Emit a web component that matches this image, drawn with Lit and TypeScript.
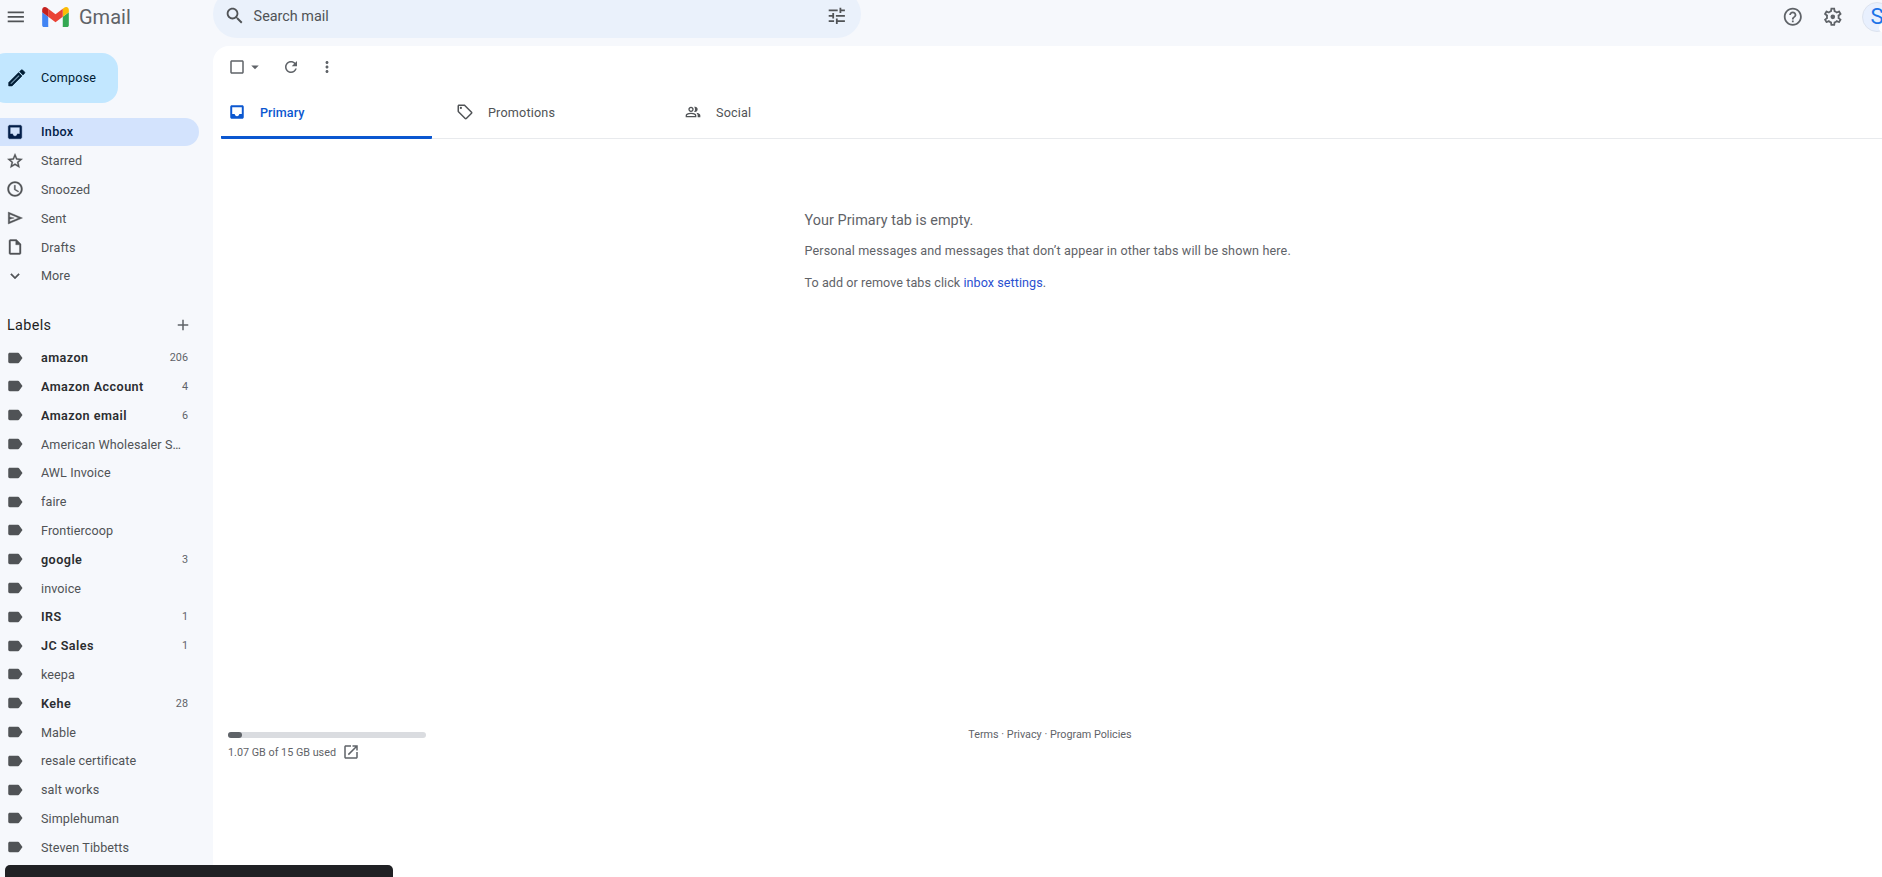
import { html, svg, css, LitElement } from "lit";
import { customElement } from "lit/decorators.js";

const paths = {
  menu: "M3 18h18v-2H3v2zm0-5h18v-2H3v2zm0-7v2h18V6H3z",
  inbox: "M19 3H5c-1.1 0-2 .9-2 2v14c0 1.1.9 2 2 2h14c1.1 0 2-.9 2-2V5c0-1.1-.9-2-2-2zm-.6 11.5H15c0 1.66-1.34 3-3 3s-3-1.34-3-3H5.6V5.6h12.8v8.9z",
  star: "M22 9.24l-7.19-.62L12 2 9.19 8.63 2 9.24l5.46 4.73L5.82 21 12 17.27 18.18 21l-1.63-7.03L22 9.24zM12 15.4l-3.76 2.27 1-4.28-3.32-2.88 4.38-.38L12 6.1l1.71 4.04 4.38.38-3.32 2.88 1 4.28L12 15.4z",
  clock: "M11.99 2C6.47 2 2 6.48 2 12s4.47 10 9.99 10C17.52 22 22 17.52 22 12S17.52 2 11.99 2zM12 20c-4.42 0-8-3.58-8-8s3.58-8 8-8 8 3.58 8 8-3.58 8-8 8zm.5-13H11v6l5.25 3.15.75-1.23-4.5-2.67z",
  send: "M3 20V4l19 8L3 20zm2-3l11.85-5L5 7v3.5l6 1.5-6 1.5V17z",
  draft: "M14 2H6c-1.1 0-1.99.9-1.99 2L4 20c0 1.1.89 2 1.99 2H18c1.1 0 2-.9 2-2V8l-6-6zM6 20V4h7v5h5v11H6z",
  more: "M16.59 8.59L12 13.17 7.41 8.59 6 10l6 6 6-6z",
  add: "M19 13h-6v6h-2v-6H5v-2h6V5h2v6h6v2z",
  label: "M17.63 5.84C17.27 5.33 16.67 5 16 5L5 5.01C3.9 5.01 3 5.9 3 7v10c0 1.1.9 1.99 2 1.99L16 19c.67 0 1.27-.33 1.63-.84L22 12l-4.37-6.16z",
  search: "M15.5 14h-.79l-.28-.27C15.41 12.59 16 11.11 16 9.5 16 5.91 13.09 3 9.5 3S3 5.91 3 9.5 5.91 16 9.5 16c1.61 0 3.09-.59 4.23-1.57l.27.28v.79l5 4.99L20.49 19l-4.99-5zm-6 0C7.01 14 5 11.99 5 9.5S7.01 5 9.5 5 14 7.01 14 9.5 11.99 14 9.5 14z",
  tune: "M3 17v2h6v-2H3zM3 5v2h10V5H3zm10 16v-2h8v-2h-8v-2h-2v6h2zM7 9v2H3v2h4v2h2V9H7zm14 4v-2H11v2h10zm-6-4h2V7h4V5h-4V3h-2v6z",
  help: "M11 18h2v-2h-2v2zm1-16C6.48 2 2 6.48 2 12s4.48 10 10 10 10-4.48 10-10S17.52 2 12 2zm0 18c-4.41 0-8-3.59-8-8s3.59-8 8-8 8 3.59 8 8-3.59 8-8 8zm0-14c-2.21 0-4 1.79-4 4h2c0-1.1.9-2 2-2s2 .9 2 2c0 2-3 1.75-3 5h2c0-2.25 3-2.5 3-5 0-2.21-1.79-4-4-4z",
  gear: "M19.43 12.98c.04-.32.07-.64.07-.98 0-.34-.03-.66-.07-.98l2.11-1.65c.19-.15.24-.42.12-.64l-2-3.46c-.09-.16-.26-.25-.44-.25-.06 0-.12.01-.17.03l-2.49 1c-.52-.4-1.08-.73-1.69-.98l-.38-2.65C14.46 2.18 14.25 2 14 2h-4c-.25 0-.46.18-.49.42l-.38 2.65c-.61.25-1.17.59-1.69.98l-2.49-1c-.06-.02-.12-.03-.18-.03-.17 0-.34.09-.43.25l-2 3.46c-.13.22-.07.49.12.64l2.11 1.65c-.04.32-.07.65-.07.98 0 .33.03.66.07.98l-2.11 1.65c-.19.15-.24.42-.12.64l2 3.46c.09.16.26.25.44.25.06 0 .12-.01.17-.03l2.49-1c.52.4 1.08.73 1.69.98l.38 2.65c.03.24.24.42.49.42h4c.25 0 .46-.18.49-.42l.38-2.65c.61-.25 1.17-.59 1.69-.98l2.49 1c.06.02.12.03.18.03.17 0 .34-.09.43-.25l2-3.46c.12-.22.07-.49-.12-.64l-2.11-1.65zm-1.98-1.71c.04.31.05.52.05.73 0 .21-.02.43-.05.73l-.14 1.13.89.7 1.08.84-.7 1.21-1.27-.51-1.04-.42-.9.68c-.43.32-.84.56-1.25.73l-1.06.43-.16 1.13-.2 1.35h-1.4l-.19-1.35-.16-1.13-1.06-.43c-.43-.18-.83-.41-1.23-.71l-.91-.7-1.06.43-1.27.51-.7-1.21 1.08-.84.89-.7-.14-1.13c-.03-.31-.05-.54-.05-.74s.02-.43.05-.73l.14-1.13-.89-.7-1.08-.84.7-1.21 1.27.51 1.04.42.9-.68c.43-.32.84-.56 1.25-.73l1.06-.43.16-1.13.2-1.35h1.39l.19 1.35.16 1.13 1.06.43c.43.18.83.41 1.23.71l.91.7 1.06-.43 1.27-.51.7 1.21-1.07.85-.89.7.14 1.13zM12 9.4a2.6 2.6 0 1 0 0 5.2 2.6 2.6 0 0 0 0-5.2z",
  edit: "M14.06 9.02l.92.92L5.92 19H5v-.92l9.06-9.06M17.66 3c-.25 0-.51.1-.7.29l-1.83 1.83 3.75 3.75 1.83-1.83c.39-.39.39-1.02 0-1.41l-2.34-2.34c-.2-.2-.45-.29-.71-.29zm-3.6 3.19L3 17.25V21h3.75L17.81 9.94l-3.75-3.75z",
  refresh: "M17.65 6.35C16.2 4.9 14.21 4 12 4c-4.42 0-7.99 3.58-7.99 8s3.57 8 7.99 8c3.73 0 6.84-2.55 7.73-6h-2.08c-.82 2.33-3.04 4-5.65 4-3.31 0-6-2.69-6-6s2.69-6 6-6c1.66 0 3.14.69 4.22 1.78L13 11h7V4l-2.35 2.35z",
  dots: "M12 8c1.1 0 2-.9 2-2s-.9-2-2-2-2 .9-2 2 .9 2 2 2zm0 2c-1.1 0-2 .9-2 2s.9 2 2 2 2-.9 2-2-.9-2-2-2zm0 6c-1.1 0-2 .9-2 2s.9 2 2 2 2-.9 2-2-.9-2-2-2z",
  tag: "M21.41 11.58l-9-9C12.05 2.22 11.55 2 11 2H4c-1.1 0-2 .9-2 2v7c0 .55.22 1.05.59 1.42l9 9c.36.36.86.58 1.41.58s1.05-.22 1.41-.59l7-7c.37-.36.59-.86.59-1.41s-.23-1.06-.59-1.42zM13 20.01L4 11V4h7v-.01l9 9-7 7.02zM6.5 5a1.5 1.5 0 1 0 0 3 1.5 1.5 0 0 0 0-3z",
  people: "M1 20v-2.8q0-.85.44-1.56.44-.71 1.16-1.09 1.55-.78 3.15-1.16Q7.35 13 9 13t3.25.39q1.6.38 3.15 1.16.72.38 1.16 1.09.44.71.44 1.56V20H1zm18 0v-3q0-1.1-.61-2.11-.61-1.01-1.74-1.74 1.28.15 2.4.51 1.13.36 2.1.89.9.5 1.37 1.11.48.61.48 1.34v3h-4zM9 12q-1.65 0-2.83-1.18Q5 9.65 5 8t1.17-2.83Q7.35 4 9 4t2.83 1.17Q13 6.35 13 8t-1.17 2.82Q10.65 12 9 12zm10-4q0 1.65-1.18 2.82Q16.65 12 15 12q-.28 0-.7-.06t-.7-.14q.68-.8 1.04-1.77.36-.98.36-2.03t-.36-2.03q-.36-.97-1.04-1.77.35-.13.7-.16.35-.04.7-.04 1.65 0 2.82 1.17Q19 6.35 19 8zM3 18h12v-.8q0-.27-.14-.5-.14-.22-.36-.35-1.35-.68-2.73-1.01Q10.38 15 9 15t-2.78.34q-1.37.33-2.72 1.01-.22.13-.36.35-.14.23-.14.5v.8zm6-8q.83 0 1.41-.59Q11 8.83 11 8t-.59-1.41Q9.83 6 9 6t-1.41.59Q7 7.17 7 8t.59 1.41Q8.17 10 9 10z",
  open: "M19 19H5V5h7V3H5c-1.11 0-2 .9-2 2v14c0 1.1.89 2 2 2h14c1.1 0 2-.9 2-2v-7h-2v7zM14 3v2h3.59l-9.83 9.83 1.41 1.41L19 6.41V10h2V3h-7z",
  check: "M19 5v14H5V5h14m0-2H5c-1.1 0-2 .9-2 2v14c0 1.1.9 2 2 2h14c1.1 0 2-.9 2-2V5c0-1.1-.9-2-2-2z",
  caret: "M7 10l5 5 5-5z",
};

type IconName = keyof typeof paths;

function icon(name: IconName, cls = "") {
  return html`<svg class="ico ${cls}" viewBox="0 0 24 24">${svg`<path d=${paths[name]}></path>`}</svg>`;
}

const nav: { name: string; ic: IconName; active?: boolean }[] = [
  { name: "Inbox", ic: "inbox", active: true },
  { name: "Starred", ic: "star" },
  { name: "Snoozed", ic: "clock" },
  { name: "Sent", ic: "send" },
  { name: "Drafts", ic: "draft" },
  { name: "More", ic: "more" },
];

const labels: { name: string; count?: number; bold?: boolean }[] = [
  { name: "amazon", count: 206, bold: true },
  { name: "Amazon Account", count: 4, bold: true },
  { name: "Amazon email", count: 6, bold: true },
  { name: "American Wholesaler Supply" },
  { name: "AWL Invoice" },
  { name: "faire" },
  { name: "Frontiercoop" },
  { name: "google", count: 3, bold: true },
  { name: "invoice" },
  { name: "IRS", count: 1, bold: true },
  { name: "JC Sales", count: 1, bold: true },
  { name: "keepa" },
  { name: "Kehe", count: 28, bold: true },
  { name: "Mable" },
  { name: "resale certificate" },
  { name: "salt works" },
  { name: "Simplehuman" },
  { name: "Steven Tibbetts" },
];

@customElement("app-root")
export class AppRoot extends LitElement {
  static styles = css`
    :host {
      display: flex;
      flex-direction: column;
      position: relative;
      height: 100vh;
      overflow: hidden;
      background: #f6f8fc;
      color: #505356;
      font-family: Roboto, "Liberation Sans", sans-serif;
      font-size: 12.6px;
    }

    .ico {
      display: block;
      flex: none;
      width: 18px;
      height: 18px;
      fill: currentColor;
    }
    .ico.lg {
      width: 21.6px;
      height: 21.6px;
    }

    /* top bar */
    .top {
      flex: none;
      display: flex;
      height: 46px;
      align-items: flex-start;
    }
    .brand {
      flex: none;
      width: 213px;
      height: 34px;
      display: flex;
      align-items: center;
      padding-left: 5px;
      box-sizing: border-box;
    }
    .logo {
      display: block;
      width: 27px;
      height: 20px;
      margin-left: 15.4px;
    }
    .wordmark {
      margin-left: 10px;
      font-size: 20px;
      color: #5f6368;
    }
    .search {
      flex: none;
      box-sizing: border-box;
      width: 648px;
      height: 48px;
      margin-top: -10px;
      padding: 4px 13px 0 11px;
      border-radius: 24px;
      background: #eaf1fb;
      display: flex;
      align-items: center;
      font-size: 14.4px;
      color: #505356;
    }
    .search .hint {
      flex: 1;
      margin-left: 8px;
    }
    .actions {
      margin-left: auto;
      display: flex;
      align-items: center;
      height: 34px;
      margin-right: -10px;
    }
    .actions .ico {
      color: #5f6368;
    }
    .actions .gear {
      margin-left: 18.4px;
    }
    .avatar {
      position: relative;
      box-sizing: border-box;
      width: 30px;
      height: 30px;
      margin-left: 18px;
      border-radius: 50%;
      background: #e8f0fe;
      border: 1px solid #dde3ee;
      color: #1a73e8;
      font-size: 22px;
      line-height: 28px;
      text-align: center;
    }
    .avatar i {
      position: absolute;
      left: 16px;
      top: 20px;
      width: 10px;
      height: 10px;
      border-radius: 50%;
      background: #fff;
    }

    .body {
      flex: 1;
      min-height: 0;
      display: flex;
    }

    /* left column */
    .side {
      flex: none;
      width: 213px;
      overflow: hidden;
      padding-top: 7px;
      box-sizing: border-box;
    }
    .compose {
      box-sizing: border-box;
      width: 128px;
      height: 50px;
      margin-left: -10px;
      margin-bottom: 14.5px;
      padding: 0 0 1px 15.8px;
      border-radius: 16px;
      background: #c2e7ff;
      color: #001d35;
      display: flex;
      align-items: center;
      letter-spacing: 0.2px;
    }
    .compose .ico {
      stroke: currentColor;
      stroke-width: 0.7;
    }
    .compose span {
      margin-left: 13.6px;
    }
    .row {
      box-sizing: border-box;
      width: 199px;
      height: 28.8px;
      padding: 0 11px 0 6px;
      border-radius: 0 14.4px 14.4px 0;
      display: flex;
      align-items: center;
      white-space: nowrap;
      letter-spacing: 0.08px;
    }
    .nav .ico {
      stroke: currentColor;
      stroke-width: 0.5;
    }
    .row .name {
      flex: 1;
      min-width: 0;
      margin-left: 17px;
      margin-right: 4px;
      overflow: hidden;
      text-overflow: ellipsis;
    }
    .row .count {
      font-size: 10.8px;
      letter-spacing: 0;
      color: #5f6368;
    }
    .row.active {
      background: #d3e3fd;
      color: #041e49;
      font-weight: 500;
      letter-spacing: 0.3px;
    }
    .row.bold .name {
      font-weight: 600;
      letter-spacing: 0.45px;
      color: #2b2d30;
    }
    .labels-head {
      box-sizing: border-box;
      width: 199px;
      height: 28.8px;
      margin: 20.5px 0 3.7px;
      padding: 0 7px;
      display: flex;
      align-items: center;
      justify-content: space-between;
      font-size: 14.4px;
      letter-spacing: 0.35px;
      color: #1f1f1f;
    }
    .labels-head .ico {
      color: #5f6368;
    }

    /* mail panel */
    .main {
      flex: 1;
      min-width: 0;
      display: flex;
      flex-direction: column;
      background: #fff;
      border-top-left-radius: 16px;
    }
    .tools {
      flex: none;
      height: 42px;
      padding-left: 15px;
      display: flex;
      align-items: center;
      color: #5f6368;
    }
    .tools .refresh {
      margin-left: 18px;
    }
    .tools .dots {
      margin-left: 18px;
    }
    .tabs {
      flex: none;
      height: 51px;
      box-sizing: border-box;
      margin-left: 8px;
      border-bottom: 1px solid #e8eaed;
      display: flex;
    }
    .tab {
      box-sizing: border-box;
      width: 228px;
      height: 51px;
      padding: 0 0 3px 24px;
      display: flex;
      align-items: center;
      gap: 14px;
      letter-spacing: 0.18px;
      color: #505356;
    }
    .tab .small {
      width: 16px;
      height: 16px;
      margin: 0 1px;
    }
    .tab.on {
      width: 211px;
      padding: 0 0 0 7px;
      color: #0b57d0;
      border-bottom: 3px solid #0b57d0;
      border-radius: 0 0 1px 1px;
      font-weight: 500;
      letter-spacing: 0.05px;
    }
    .empty {
      flex: 1;
      align-self: center;
      width: 486px;
      padding-top: 72px;
      color: #5f6368;
      white-space: nowrap;
    }
    .empty h2 {
      margin: 0 0 11px;
      font-size: 14.4px;
      font-weight: 400;
      line-height: 20px;
      letter-spacing: 0.05px;
    }
    .empty p {
      margin: 0 0 14px;
      line-height: 18px;
      letter-spacing: 0.13px;
    }
    .empty p.hint {
      letter-spacing: 0.06px;
    }
    .empty a {
      color: #2a50d0;
    }
    .foot {
      flex: none;
      display: grid;
      grid-template-columns: 1fr auto 1fr;
      padding: 0 15px 116px;
      font-size: 10.8px;
      color: #5f6368;
    }
    .bar {
      width: 198px;
      height: 6px;
      border-radius: 3px;
      background: #dadce0;
    }
    .bar div {
      height: 100%;
      border-radius: 3px;
      background: #5f6368;
    }
    .used {
      display: flex;
      align-items: center;
      gap: 6px;
      margin-top: 5px;
    }
    .terms {
      margin: -4.4px 0 0 5px;
      line-height: 14px;
    }

    .toast {
      position: absolute;
      left: 5px;
      top: 865px;
      width: 388px;
      height: 48px;
      border-radius: 5px;
      background: #202124;
    }
  `;

  render() {
    return html`
      <div class="top">
        <div class="brand">
          ${icon("menu", "lg")}
          <svg class="logo" viewBox="52 42 88 66">
            <path fill="#4285f4" d="M58 108h14V74L52 59v43c0 3.32 2.69 6 6 6"></path>
            <path fill="#34a853" d="M120 108h14c3.32 0 6-2.69 6-6V59l-20 15"></path>
            <path fill="#fbbc04" d="M120 48v26l20-15v-8c0-7.42-8.47-11.65-14.4-7.2"></path>
            <path fill="#ea4335" d="M72 74V48l24 18 24-18v26L96 92"></path>
            <path fill="#c5221f" d="M52 51v8l20 15V48l-5.6-4.2c-5.94-4.45-14.4-.22-14.4 7.2"></path>
          </svg>
          <span class="wordmark">Gmail</span>
        </div>
        <div class="search">
          ${icon("search", "lg")}
          <span class="hint">Search mail</span>
          ${icon("tune", "lg")}
        </div>
        <div class="actions">
          ${icon("help", "lg")} ${icon("gear", "lg gear")}
          <div class="avatar">S<i></i></div>
        </div>
      </div>
      <div class="body">
        <div class="side">
          <div class="compose">${icon("edit", "lg")}<span>Compose</span></div>
          <div class="nav">
            ${nav.map(
              (n) => html`<div class="row ${n.active ? "active" : ""}">
                ${icon(n.ic)}<span class="name">${n.name}</span>
              </div>`
            )}
          </div>
          <div class="labels-head"><span>Labels</span>${icon("add")}</div>
          ${labels.map(
            (l) => html`<div class="row ${l.bold ? "bold" : ""}">
              ${icon("label")}<span class="name">${l.name}</span>
              ${l.count ? html`<span class="count">${l.count}</span>` : ""}
            </div>`
          )}
        </div>
        <div class="main">
          <div class="tools">
            ${icon("check")} ${icon("caret")} ${icon("refresh", "refresh")} ${icon("dots", "dots")}
          </div>
          <div class="tabs">
            <div class="tab on">${icon("inbox")}<span>Primary</span></div>
            <div class="tab">${icon("tag")}<span>Promotions</span></div>
            <div class="tab">${icon("people", "small")}<span>Social</span></div>
          </div>
          <div class="empty">
            <h2>Your Primary tab is empty.</h2>
            <p>Personal messages and messages that don’t appear in other tabs will be shown here.</p>
            <p class="hint">To add or remove tabs click <a>inbox settings</a>.</p>
          </div>
          <div class="foot">
            <div>
              <div class="bar"><div style="width: ${(1.07 / 15) * 100}%"></div></div>
              <div class="used"><span>1.07 GB of 15 GB used</span>${icon("open")}</div>
            </div>
            <div class="terms">Terms · Privacy · Program Policies</div>
            <div></div>
          </div>
        </div>
      </div>
      <div class="toast"></div>
    `;
  }
}
